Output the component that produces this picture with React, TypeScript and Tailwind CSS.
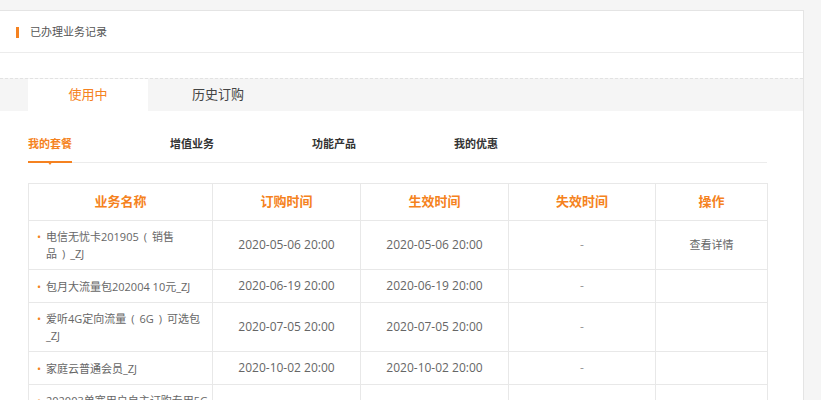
import React from 'react';

// names are split into the lines they wrap to in the reference
const rows = [
  { name: ['电信无忧卡201905（销售', '品）_ZJ'], order: '2020-05-06 20:00', start: '2020-05-06 20:00', end: '-', op: '查看详情' },
  { name: ['包月大流量包202004 10元_ZJ'], order: '2020-06-19 20:00', start: '2020-06-19 20:00', end: '-', op: '' },
  { name: ['爱听4G定向流量（6G）可选包', '_ZJ'], order: '2020-07-05 20:00', start: '2020-07-05 20:00', end: '-', op: '' },
  { name: ['家庭云普通会员_ZJ'], order: '2020-10-02 20:00', start: '2020-10-02 20:00', end: '-', op: '' },
  { name: ['202003单宽用户自主订购专用5G', '流量包_ZJ'], order: '2020-11-01 20:00', start: '2020-11-01 20:00', end: '-', op: '' },
];

const subTabs = ['我的套餐', '增值业务', '功能产品', '我的优惠'];

// full-width brackets look centred in the original font
const withParens = (s: string) =>
  s.split(/([（）])/).map((p, i) => {
    if (p === '（') return <span key={i} className="px-[5px]">(</span>;
    if (p === '）') return <span key={i} className="px-[5px]">)</span>;
    return p;
  });

export default function App() {
  return (
    <div className="min-h-screen bg-[#f5f5f5] pt-[10px] font-['Open_Sans','Noto_Sans_CJK_SC',sans-serif]">
      <div className="w-[804px] bg-white border-t border-r border-[#e4e4e4]">
        {/* Header */}
        <div className="h-[42px] flex items-center pl-[16px] pt-[1px] border-b border-[#ececec]">
          <span className="w-[3px] h-[11px] bg-[#f58220]" />
          <span className="ml-[11px] text-[11px] leading-[16px] text-[#555]">已办理业务记录</span>
        </div>

        <div className="h-[25px]" />

        {/* Tabs */}
        <div className="flex h-[33px] bg-[#f5f5f5] border-t border-dashed border-[#e2e2e2] pl-[28px]">
          <div className="w-[120px] bg-white flex items-center justify-center text-[13px] text-[#f58220]">使用中</div>
          <div className="w-[140px] flex items-center justify-center text-[13px] text-[#444]">历史订购</div>
        </div>

        <div className="pl-[28px] pr-[36px] pb-[40px]">
          {/* Sub tabs */}
          <div className="flex mt-[25px] border-b border-[#ececec]">
            {subTabs.map((t, i) => (
              <div key={t} className="w-[142px] flex">
                {i === 0 ? (
                  <span className="relative block pb-[9px] -mb-px border-b-2 border-[#f58220] text-[11px] leading-[16px] font-bold text-[#f58220]">
                    {t}
                    <span className="absolute left-1/2 -translate-x-1/2 top-full w-0 h-0 border-l-[3px] border-r-[3px] border-t-[4px] border-l-transparent border-r-transparent border-t-[#f58220]" />
                  </span>
                ) : (
                  <span className="block pb-[10px] text-[11px] leading-[16px] font-bold text-[#333]">{t}</span>
                )}
              </div>
            ))}
          </div>

          {/* Table */}
          <table className="mt-[20px] w-[739px] table-fixed border-collapse">
            <colgroup>
              <col className="w-[184px]" />
              <col className="w-[148px]" />
              <col className="w-[148px]" />
              <col className="w-[147px]" />
              <col className="w-[112px]" />
            </colgroup>
            <thead>
              <tr className="h-[37px]">
                {['业务名称', '订购时间', '生效时间', '失效时间', '操作'].map((h) => (
                  <th key={h} className="border border-[#e8e8e8] text-[13px] font-bold text-[#f58220] text-center">
                    {h}
                  </th>
                ))}
              </tr>
            </thead>
            <tbody>
              {rows.map((r) => (
                <tr key={r.name.join('')} className="h-[33px]">
                  <td className="border border-[#e8e8e8] pl-[8px] py-[7px] align-middle">
                    <div className="flex text-[11px] leading-[17px] text-[#666]">
                      <span className="w-[9px] shrink-0 text-[#f58220]">•</span>
                      <div className="whitespace-nowrap">
                        {r.name.map((line) => (
                          <div key={line}>{withParens(line)}</div>
                        ))}
                      </div>
                    </div>
                  </td>
                  <td className="border border-[#e8e8e8] text-center text-[12px] text-[#666]">{r.order}</td>
                  <td className="border border-[#e8e8e8] text-center text-[12px] text-[#666]">{r.start}</td>
                  <td className="border border-[#e8e8e8] text-center text-[12px] text-[#999]">{r.end}</td>
                  <td className="border border-[#e8e8e8] text-center text-[11px] text-[#666]">{r.op}</td>
                </tr>
              ))}
            </tbody>
          </table>
        </div>
      </div>
    </div>
  );
}
